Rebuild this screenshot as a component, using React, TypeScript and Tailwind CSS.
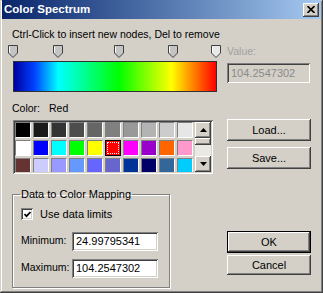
import React from "react";

const raised =
  "bg-[#d4d0c8] shadow-[inset_-1px_-1px_#404040,inset_1px_1px_#ffffff,inset_-2px_-2px_#808080,inset_2px_2px_#d4d0c8]";
const sunken =
  "shadow-[inset_1px_1px_#808080,inset_-1px_-1px_#ffffff,inset_2px_2px_#404040,inset_-2px_-2px_#d4d0c8]";

const palette = [
  ["#000000", "#1a1a1a", "#333333", "#4d4d4d", "#666666", "#808080", "#999999", "#b3b3b3", "#cccccc", "#e6e6e6"],
  ["#ffffff", "#0000ff", "#00ffff", "#00ff00", "#ffff00", "#ff0000", "#ff00ff", "#9900cc", "#ff6600", "#ff99cc"],
  ["#663333", "#ccccff", "#9999ff", "#6699ff", "#6666ff", "#6666cc", "#003399", "#000066", "#336699", "#00ccff"],
];

// node centers, relative to the left column
const nodes = [1, 46, 107, 161, 204];

function Marker({ light }: { light?: boolean }) {
  return (
    <svg width="10" height="13" viewBox="0 0 10 13">
      <path
        d="M0.5 0.5 H9.5 V8 L5 12.5 L0.5 8 Z"
        fill={light ? "#e8e8e8" : "#c4c4c4"}
        stroke="#404040"
      />
      <path d="M1.5 1.5 V7.6" stroke="#ffffff" />
    </svg>
  );
}

function Button({ label, isDefault, short }: { label: string; isDefault?: boolean; short?: boolean }) {
  return (
    <div
      className={`w-[84px] flex items-center justify-center text-[11px] text-black ${raised} ${
        isDefault ? "border border-black" : ""
      } ${short ? "h-[20px]" : "h-[22px]"}`}
    >
      {label}
    </div>
  );
}

function Arrow({ down }: { down?: boolean }) {
  return (
    <div className={`w-[16px] h-[16px] flex items-center justify-center ${raised}`}>
      <svg width="7" height="4" viewBox="0 0 7 4">
        <path d={down ? "M0 0 H7 L3.5 4 Z" : "M0 4 H7 L3.5 0 Z"} fill="#000" />
      </svg>
    </div>
  );
}

export default function App() {
  return (
    <div className="w-[323px] h-[293px] bg-[#d4d0c8] font-['Liberation_Sans',Arial,sans-serif] shadow-[inset_-1px_-1px_#404040,inset_1px_1px_#d4d0c8,inset_-2px_-2px_#808080,inset_2px_2px_#ffffff] px-[2px] overflow-hidden">
      {/* title bar */}
      <div className="h-[19px] bg-gradient-to-r from-[#0a246a] to-[#a6caf0] flex items-center justify-between pl-[2px] pr-[2px]">
        <span className="text-white font-bold text-[11.5px] leading-none">Color Spectrum</span>
        <div className={`w-[16px] h-[14px] flex items-center justify-center ${raised}`}>
          <svg width="8" height="7" viewBox="0 0 8 7">
            <path d="M0.5 0 L7.5 7 M7.5 0 L0.5 7" stroke="#000" strokeWidth="1.6" />
          </svg>
        </div>
      </div>

      <div className="flex pl-[10px] text-[10.5px] text-black">
        {/* left column */}
        <div className="w-[206px] flex flex-col">
          <div className="mt-[9px] h-[13px] leading-[13px] whitespace-nowrap">
            Ctrl-Click to insert new nodes, Del to remove
          </div>
          <div className="relative mt-[4px] h-[14px]">
            {nodes.map((x, i) => (
              <div key={i} className="absolute top-0" style={{ left: x - 5 }}>
                <Marker light={i === nodes.length - 1} />
              </div>
            ))}
          </div>
          <div className="mt-[2px] ml-[1px] w-[204px] h-[31px] border border-[#303030] bg-[linear-gradient(to_right,#0000a0_0%,#0040ff_10%,#00ffff_22%,#00ff00_52%,#ffff00_78%,#ff0000_100%)]" />
          <div className="mt-[10px] h-[13px] leading-[13px] flex">
            <span className="w-[37px]">Color:</span>
            <span>Red</span>
          </div>
          <div className={`mt-[5px] ml-[1px] w-[200px] h-[54px] p-[2px] flex bg-[#d4d0c8] ${sunken}`}>
            <div className="flex-1 overflow-hidden">
              <div className="grid grid-cols-[repeat(10,16px)] gap-[2px]">
                {palette.flat().map((c, i) =>
                  c === "#ff0000" ? (
                    <div key={i} className="w-[16px] h-[16px] border border-black p-[1px]" style={{ background: c }}>
                      <div className="w-full h-full border border-dotted border-white" />
                    </div>
                  ) : (
                    <div
                      key={i}
                      className="w-[16px] h-[16px] border border-t-[#808080] border-l-[#808080] border-b-[#ffffff] border-r-[#ffffff]"
                      style={{ background: c }}
                    />
                  )
                )}
              </div>
            </div>
            <div className="w-[16px] flex flex-col bg-[#ebe9e4]">
              <Arrow />
              <div className={`h-[7px] ${raised}`} />
              <div className="flex-1" />
              <Arrow down />
            </div>
          </div>
          <fieldset className="mt-[14px] w-[158px] h-[100px] border border-[#808080] shadow-[inset_1px_1px_#ffffff,1px_1px_#ffffff] px-[8px]">
            <legend className="ml-[-1px] px-[1px] text-[11px] leading-[12px]">Data to Color Mapping</legend>
            <div className="mt-[6px] flex items-center gap-[7px]">
              <div className={`w-[12px] h-[12px] bg-white flex items-center justify-center ${sunken}`}>
                <svg width="7" height="7" viewBox="0 0 7 7">
                  <path d="M0.5 3 L2.5 5.2 L6.5 1" stroke="#000" strokeWidth="1.7" fill="none" />
                </svg>
              </div>
              <span className="text-[11px]">Use data limits</span>
            </div>
            <div className="mt-[9px] flex items-center">
              <span className="w-[51px] text-[10.5px]">Minimum:</span>
              <div className={`w-[86px] h-[19px] bg-white flex items-center pl-[4px] text-[11px] ${sunken}`}>
                24.99795341
              </div>
            </div>
            <div className="mt-[8px] flex items-center">
              <span className="w-[51px] text-[10.5px]">Maximum:</span>
              <div className={`w-[86px] h-[19px] bg-white flex items-center pl-[4px] text-[11px] ${sunken}`}>
                104.2547302
              </div>
            </div>
          </fieldset>
        </div>

        {/* right column */}
        <div className="ml-[9px] w-[84px] flex flex-col">
          <div className="mt-[26px] h-[13px] leading-[13px] text-[#a0a0a0]">Value:</div>
          <div className={`mt-[5px] w-[83px] h-[20px] flex items-center pl-[4px] text-[11px] text-[#8a8a8a] ${sunken}`}>
            104.2547302
          </div>
          <div className="mt-[36px] flex flex-col gap-[6px]">
            <Button label="Load..." />
            <Button label="Save..." />
          </div>
          <div className="mt-[62px] flex flex-col gap-[2px]">
            <Button label="OK" isDefault />
            <Button label="Cancel" short />
          </div>
        </div>
      </div>
    </div>
  );
}
